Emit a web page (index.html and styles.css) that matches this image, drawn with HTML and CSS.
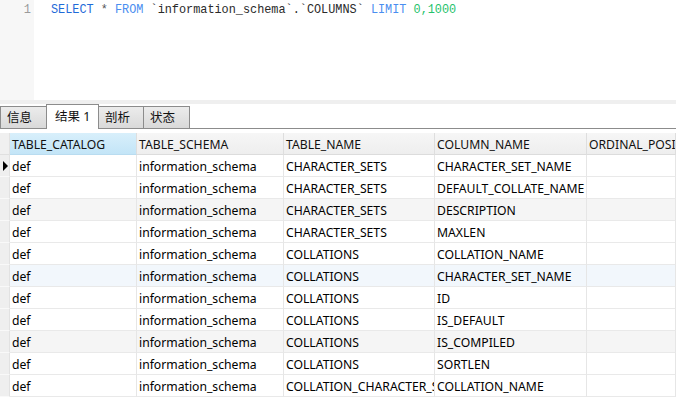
FILE: index.html
```html
<!DOCTYPE html>
<html>
<head>
<meta charset="utf-8">
<link rel="stylesheet" href="styles.css">
</head>
<body>
<div class="editor">
  <div class="gutter">1</div>
  <div class="code"><span class="kw">SELECT</span> <span class="op">*</span> <span class="kw2">FROM</span> <span class="id">`information_schema`.`COLUMNS`</span> <span class="kw2">LIMIT</span> <span class="num">0,1000</span></div>
</div>
<div class="splitter"></div>
<div class="tabs">
  <div class="tab">信息</div>
  <div class="tab active">结果 1</div>
  <div class="tab">剖析</div>
  <div class="tab">状态</div>
</div>
<div class="gap"></div>
<div class="grid">
  <div class="ind hd"></div>
  <div class="hcell sel">TABLE_CATALOG</div>
  <div class="hcell">TABLE_SCHEMA</div>
  <div class="hcell">TABLE_NAME</div>
  <div class="hcell">COLUMN_NAME</div>
  <div class="hcell">ORDINAL_POSITION</div>

  <div class="ind"><span class="arrow"></span></div>
  <div class="cell">def</div><div class="cell">information_schema</div><div class="cell">CHARACTER_SETS</div><div class="cell">CHARACTER_SET_NAME</div><div class="cell"></div>

  <div class="ind"></div>
  <div class="cell">def</div><div class="cell">information_schema</div><div class="cell">CHARACTER_SETS</div><div class="cell">DEFAULT_COLLATE_NAME</div><div class="cell"></div>

  <div class="ind"></div>
  <div class="cell g">def</div><div class="cell g">information_schema</div><div class="cell g">CHARACTER_SETS</div><div class="cell g">DESCRIPTION</div><div class="cell g"></div>

  <div class="ind"></div>
  <div class="cell">def</div><div class="cell">information_schema</div><div class="cell">CHARACTER_SETS</div><div class="cell">MAXLEN</div><div class="cell"></div>

  <div class="ind"></div>
  <div class="cell">def</div><div class="cell">information_schema</div><div class="cell">COLLATIONS</div><div class="cell">COLLATION_NAME</div><div class="cell"></div>

  <div class="ind"></div>
  <div class="cell b">def</div><div class="cell b">information_schema</div><div class="cell b">COLLATIONS</div><div class="cell b">CHARACTER_SET_NAME</div><div class="cell b"></div>

  <div class="ind"></div>
  <div class="cell">def</div><div class="cell">information_schema</div><div class="cell">COLLATIONS</div><div class="cell">ID</div><div class="cell"></div>

  <div class="ind"></div>
  <div class="cell">def</div><div class="cell">information_schema</div><div class="cell">COLLATIONS</div><div class="cell">IS_DEFAULT</div><div class="cell"></div>

  <div class="ind"></div>
  <div class="cell g">def</div><div class="cell g">information_schema</div><div class="cell g">COLLATIONS</div><div class="cell g">IS_COMPILED</div><div class="cell g"></div>

  <div class="ind"></div>
  <div class="cell">def</div><div class="cell">information_schema</div><div class="cell">COLLATIONS</div><div class="cell">SORTLEN</div><div class="cell"></div>

  <div class="ind"></div>
  <div class="cell">def</div><div class="cell">information_schema</div><div class="cell clip">COLLATION_CHARACTER_SET_APPLICABILITY</div><div class="cell">COLLATION_NAME</div><div class="cell"></div>
</div>
</body>
</html>
```

FILE: styles.css
```css
html, body {
  margin: 0;
  padding: 0;
  overflow: hidden;
  background: #ffffff;
}

body {
  width: 676px;
  height: 397px;
  font-family: "Noto Sans", "Noto Sans CJK SC", sans-serif;
  font-size: 12.2px;
  color: #000;
}

.editor {
  display: flex;
  height: 100px;
}

.gutter {
  width: 31px;
  padding-right: 3px;
  background: #f7f7f7;
  color: #9a9a9a;
  text-align: right;
  font-family: "Liberation Mono", monospace;
  font-size: 12px;
  line-height: 16px;
  padding-top: 2px;
  box-sizing: content-box;
}

.code {
  padding-left: 17px;
  padding-top: 2px;
  font-family: "Liberation Mono", monospace;
  font-size: 11.85px;
  line-height: 16px;
  white-space: pre;
  color: #333;
}

.kw { color: #1f6bd8; }
.kw2 { color: #4a8ef0; }
.op { color: #555; }
.id { color: #2a2a2a; }
.num { color: #25c26b; }

.splitter {
  height: 4px;
  background: #efefef;
}

.tabs {
  display: flex;
  align-items: flex-end;
  height: 24px;
  border-bottom: 1px solid #8c8c8c;
}

.tab {
  box-sizing: border-box;
  height: 22px;
  padding: 0 6px;
  border: 1px solid #8c8c8c;
  border-bottom: none;
  margin-right: -1px;
  background: linear-gradient(#ececec, #d9d9d9);
  font-size: 12.5px;
  line-height: 22px;
  color: #111;
}

.tab:nth-child(1) { width: 47px; }
.tab:nth-child(3) { width: 46px; }
.tab:nth-child(4) { width: 47px; }

.tab.active {
  width: 53px;
  height: 25px;
  margin-bottom: -1px;
  background: #ffffff;
  line-height: 24px;
  padding-left: 8px;
  position: relative;
}

.gap {
  height: 4px;
}

.grid {
  display: grid;
  grid-template-columns: 10px 127px 147px 151px 152px 89px;
  grid-auto-rows: 22px;
}

.ind {
  box-sizing: border-box;
  background: #efefef;
  border-bottom: 1px solid #f9f9f9;
  border-right: 1px solid #e2e2e2;
  display: flex;
  align-items: center;
}

.ind.hd {
  background: #f0f0f0;
  border-bottom: 1px solid #e0e0e0;
}

.arrow {
  width: 0;
  height: 0;
  margin-left: 3px;
  border-top: 5px solid transparent;
  border-bottom: 5px solid transparent;
  border-left: 5px solid #000;
}

.hcell, .cell {
  box-sizing: border-box;
  padding: 2px 0 0 2px;
  white-space: nowrap;
  overflow: hidden;
  text-overflow: clip;
  line-height: 19px;
  border-right: 1px solid #e6e6e6;
  border-bottom: 1px solid #e9e9e9;
}

.hcell {
  background: linear-gradient(#f6f6f6, #eeeeee);
  border-right: 1px solid #dedede;
  border-bottom: 1px solid #dcdcdc;
  color: #111;
}

.hcell.sel {
  background: linear-gradient(#d8effb, #c3e5f7);
  border-bottom-color: #b9dcf0;
}

.cell.g { background: #f5f5f5; }
.cell.b { background: #f2f7fc; }
```
